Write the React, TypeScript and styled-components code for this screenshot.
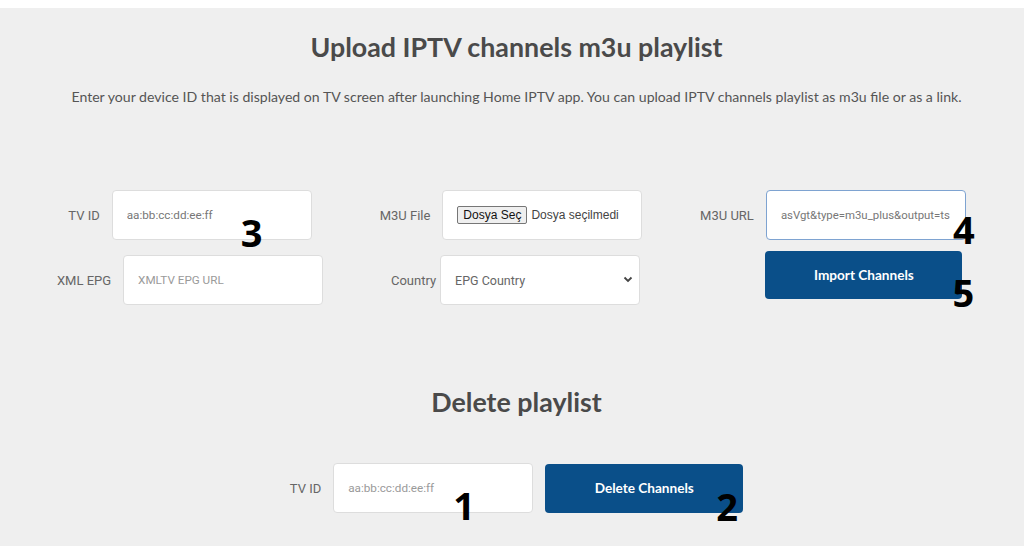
import { createGlobalStyle } from 'styled-components';
import styled from 'styled-components';

const GlobalStyle = createGlobalStyle`
  body {
    margin: 0;
    background: #ffffff;
    font-family: Lato, 'Open Sans', sans-serif;
  }
  * {
    box-sizing: border-box;
  }
`;

const StyledPanel = styled.main`
  margin-top: 8px;
  height: 538px;
  background: #efefef;
  padding: 24px 19px 0 28px;
  display: flex;
  flex-direction: column;
  align-items: center;
`;

const StyledTitle = styled.h1`
  margin: 0;
  font-family: Lato, sans-serif;
  font-size: 26.8px;
  line-height: 31px;
  font-weight: 700;
  color: #4a4a4a;
`;

const StyledSubTitle = styled.p`
  margin: 24px 0 0;
  font-family: Lato, sans-serif;
  font-size: 14.1px;
  line-height: 20px;
  color: #555555;
`;

const StyledForm = styled.div`
  align-self: flex-start;
  display: flex;
  width: 968px;
  margin-top: 83px;
`;

const StyledColumn = styled.div<{ $gap?: number }>`
  width: 322px;
  display: flex;
  flex-direction: column;
  align-items: center;
  gap: ${(p) => p.$gap ?? 15}px;
`;

const StyledRow = styled.div<{ $shift?: number; $gap?: number }>`
  display: flex;
  align-items: center;
  gap: ${(p) => p.$gap ?? 12}px;
  margin-left: ${(p) => p.$shift ?? 0}px;
`;

const StyledLabel = styled.label`
  font-family: Roboto, 'Liberation Sans', sans-serif;
  font-size: 13px;
  color: #666666;
  white-space: nowrap;
`;

const StyledGhostLabel = styled(StyledLabel)`
  visibility: hidden;
`;

const StyledField = styled.div`
  position: relative;
`;

const StyledInput = styled.input<{ $focused?: boolean }>`
  width: 200px;
  height: 50px;
  padding: 0 ${(p) => (p.$focused ? '6px 0 14px' : '14px')};
  border: 1px solid ${(p) => (p.$focused ? '#7ea3d1' : '#dddddd')};
  border-radius: 4px;
  background: #ffffff;
  font-family: Roboto, 'Liberation Sans', sans-serif;
  font-size: ${(p) => (p.$focused ? 11.4 : 11.7)}px;
  color: #777777;
  outline: none;

  &::placeholder {
    color: #9a9a9a;
  }
`;

const StyledFileBox = styled.div`
  width: 200px;
  height: 50px;
  padding: 0 14px;
  border: 1px solid #dddddd;
  border-radius: 4px;
  background: #ffffff;
  display: flex;
  align-items: center;
  gap: 4px;
  font-family: Arial, 'Liberation Sans', sans-serif;
  font-size: 12px;
  color: #444444;
  white-space: nowrap;
  overflow: hidden;
`;

const StyledFileButton = styled.button`
  height: 18px;
  padding: 0 5px;
  border: 1px solid #767676;
  border-radius: 2px;
  background: #efefef;
  font-family: Arial, 'Liberation Sans', sans-serif;
  font-size: 12px;
  color: #111111;
`;

const StyledSelect = styled.select`
  width: 200px;
  height: 50px;
  padding: 0 36px 0 14px;
  border: 1px solid #dddddd;
  border-radius: 4px;
  background: #ffffff;
  appearance: none;
  font-family: Roboto, 'Liberation Sans', sans-serif;
  font-size: 12.5px;
  color: #666666;
  outline: none;
`;

const StyledChevron = styled.svg`
  position: absolute;
  right: 7px;
  top: 21px;
  pointer-events: none;
`;

const StyledButton = styled.button<{ $width: number }>`
  width: ${(p) => p.$width}px;
  height: ${(p) => (p.$width > 197 ? 49 : 48)}px;
  border: none;
  border-radius: 4px;
  background: #0a4f89;
  color: #ffffff;
  font-family: Lato, sans-serif;
  font-size: 13.6px;
  font-weight: 700;
`;

const StyledBadge = styled.span<{ $left: number; $top: number }>`
  position: absolute;
  left: ${(p) => p.$left}px;
  top: ${(p) => p.$top}px;
  font-family: 'Open Sans', sans-serif;
  font-size: 38px;
  line-height: 1;
  font-weight: 700;
  color: #000000;
  pointer-events: none;
`;

const StyledDeleteTitle = styled(StyledTitle)`
  margin-top: 82px;
`;

const StyledDeleteRow = styled(StyledRow)`
  margin-top: 45px;
`;

const App = () => {
  return (
    <>
      <GlobalStyle />
      <StyledPanel>
        <StyledTitle>Upload IPTV channels m3u playlist</StyledTitle>
        <StyledSubTitle>
          Enter your device ID that is displayed on TV screen after launching Home IPTV app. You can
          upload IPTV channels playlist as m3u file or as a link.
        </StyledSubTitle>

        <StyledForm>
          <StyledColumn>
            <StyledRow $shift={2}>
              <StyledLabel>TV ID</StyledLabel>
              <StyledField>
                <StyledInput placeholder="aa:bb:cc:dd:ee:ff" defaultValue="aa:bb:cc:dd:ee:ff" />
                <StyledBadge $left={129} $top={23}>3</StyledBadge>
              </StyledField>
            </StyledRow>
            <StyledRow $shift={2}>
              <StyledLabel>XML EPG</StyledLabel>
              <StyledInput placeholder="XMLTV EPG URL" />
            </StyledRow>
          </StyledColumn>

          <StyledColumn>
            <StyledRow>
              <StyledLabel>M3U File</StyledLabel>
              <StyledFileBox>
                <StyledFileButton>Dosya Seç</StyledFileButton>
                <span>Dosya seçilmedi</span>
              </StyledFileBox>
            </StyledRow>
            <StyledRow $shift={9} $gap={4}>
              <StyledLabel>Country</StyledLabel>
              <StyledField>
                <StyledSelect defaultValue="">
                  <option value="">EPG Country</option>
                </StyledSelect>
                <StyledChevron width="10" height="7" viewBox="0 0 10 7">
                  <path d="M1.5 1.5 L5 5 L8.5 1.5" fill="none" stroke="#444" strokeWidth="1.8" />
                </StyledChevron>
              </StyledField>
            </StyledRow>
          </StyledColumn>

          <StyledColumn $gap={11}>
            <StyledRow>
              <StyledLabel>M3U URL</StyledLabel>
              <StyledField>
                <StyledInput $focused defaultValue="asVgt&type=m3u_plus&output=ts" />
                <StyledBadge $left={187} $top={20}>4</StyledBadge>
              </StyledField>
            </StyledRow>
            <StyledRow $shift={-4}>
              <StyledGhostLabel>M3U URL</StyledGhostLabel>
              <StyledField>
                <StyledButton $width={197}>Import Channels</StyledButton>
                <StyledBadge $left={187} $top={22}>5</StyledBadge>
              </StyledField>
            </StyledRow>
          </StyledColumn>
        </StyledForm>

        <StyledDeleteTitle>Delete playlist</StyledDeleteTitle>
        <StyledDeleteRow>
          <StyledLabel>TV ID</StyledLabel>
          <StyledField>
            <StyledInput placeholder="aa:bb:cc:dd:ee:ff" />
            <StyledBadge $left={120} $top={23}>1</StyledBadge>
          </StyledField>
          <StyledField>
            <StyledButton $width={198}>Delete Channels</StyledButton>
            <StyledBadge $left={171} $top={23}>2</StyledBadge>
          </StyledField>
        </StyledDeleteRow>
      </StyledPanel>
    </>
  );
};

export default App;
